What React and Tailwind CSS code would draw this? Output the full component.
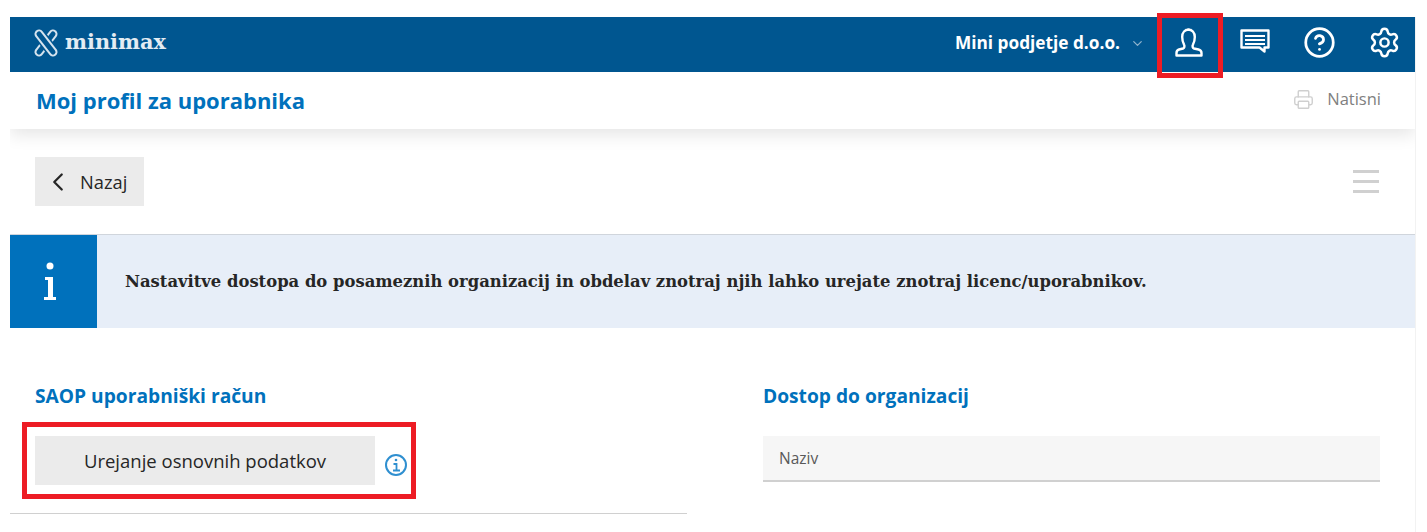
import React from 'react';
import { ChevronDown, ChevronLeft, Printer, CircleHelp, Settings } from 'lucide-react';

const UserIcon = () => (
  <svg width="28" height="30" viewBox="0 0 28 30" fill="none" stroke="white" strokeWidth="2.4" strokeLinejoin="round">
    <path d="M14 1.500c-4 0-6.800 3-6.800 7.500 0 3 .8 5.500 1.800 7.500.8 1.500.5 3.500-1 4l-4 1C2.500 22 1.500 23.500 1.500 25v2.500h25V25c0-1.500-1-3-3-3.500l-4.500-1c-1.500-.5-1.800-2.500-1-4 1-2 1.800-4.500 1.800-7.500 0-4.500-2.800-7.500-6.800-7.500z" />
  </svg>
);

const ChatIcon = () => (
  <svg width="30" height="25" viewBox="0 0 30 25" fill="none" stroke="white" strokeWidth="2.4">
    <path d="M1.500 1.500h27v17h-4v4l-5-4H1.500z" strokeLinejoin="round" />
    <path d="M5 7h20M5 11h20M5 15h20" strokeWidth="1.800" />
  </svg>
);

const LogoMark = () => (
  <svg width="24" height="30" viewBox="0 0 24 30" fill="none" strokeLinecap="round">
    <path d="M19 6L5 24" stroke="#d5e3ee" strokeWidth="9" />
    <path d="M19 6L5 24" stroke="#005690" strokeWidth="5" />
    <path d="M5 6l14 18" stroke="#005690" strokeWidth="12" />
    <path d="M5 6l14 18" stroke="#d5e3ee" strokeWidth="9" />
    <path d="M5 6l14 18" stroke="#005690" strokeWidth="5" />
  </svg>
);

const InfoSmall = () => (
  <svg width="24" height="24" viewBox="0 0 24 24" fill="none" stroke="#2f8fd0" strokeWidth="2">
    <circle cx="12" cy="12" r="10" />
    <circle cx="12" cy="7" r="1.300" fill="#2f8fd0" stroke="none" />
    <path d="M9.500 11H12.500v6.500M9 17.500h7" strokeWidth="1.800" />
  </svg>
);

export default function App() {
  return (
    <div className="relative h-[532px] overflow-hidden bg-white pl-[10px] pr-[12px] pt-[17px] font-['Open_Sans',sans-serif] text-[#262626]">
      <div className="-mr-[1px] h-full overflow-hidden border-r border-[#f2f2f2]">
        {/* Top bar */}
        <header className="relative z-10 flex h-[55px] items-center bg-[#005690] pb-[4px] pl-[24px] pr-[14px] text-white">
          <div className="flex items-center gap-[7px]">
            <LogoMark />
            <span className="font-['DejaVu_Serif',serif] text-[20.800px] font-bold leading-none text-[#e3ecf3]">minimax</span>
          </div>
          <div className="ml-auto flex items-center">
            <span className="text-[17.250px] font-bold">Mini podjetje d.o.o.</span>
            <ChevronDown className="ml-[10px] mt-[2px] h-[15px] w-[15px] text-[#8fb3cc]" strokeWidth={2} />
            <div className="ml-[30px]"><UserIcon /></div>
            <div className="ml-[37px] mb-[3px]"><ChatIcon /></div>
            <CircleHelp className="ml-[33px] h-[33px] w-[33px] text-white" strokeWidth={2} />
            <Settings className="ml-[32px] h-[33px] w-[33px] text-white" strokeWidth={1.800} />
          </div>
        </header>

        {/* Page title */}
        <div className="flex h-[57px] items-center justify-between pb-[2px] pl-[26px] pr-[34px] shadow-[0_6px_16px_rgba(0,0,0,0.1)]">
          <h1 className="text-[22px] font-bold leading-none text-[#0071bc]">Moj profil za uporabnika</h1>
          <div className="flex items-center gap-[13px] text-[#808080]">
            <Printer className="h-[21px] w-[21px] text-[#cfcfcf]" strokeWidth={1.600} />
            <span className="text-[16.500px]">Natisni</span>
          </div>
        </div>

        {/* Toolbar */}
        <div className="flex items-center justify-between pl-[25px] pr-[36px] pt-[28px]">
          <button className="flex h-[49px] w-[109px] items-center bg-[#ebebeb] pl-[8px] text-[18.300px]">
            <ChevronLeft className="h-[30px] w-[30px]" strokeWidth={1.800} />
            <span className="ml-[7px]">Nazaj</span>
          </button>
          <div className="flex w-[26px] flex-col gap-[7px]">
            <div className="h-[3px] bg-[#d0d0d0]" />
            <div className="h-[3px] bg-[#d0d0d0]" />
            <div className="h-[3px] bg-[#d0d0d0]" />
          </div>
        </div>

        {/* Notice */}
        <div className="mt-[28px] flex h-[94px] border-t border-[#d0d5dc] bg-[#e7eef8]">
          <div className="flex w-[87px] items-center justify-center bg-[#0071bc] pr-[7px]">
            <svg width="14" height="40" viewBox="0 0 14 40" fill="white">
              <circle cx="7" cy="4" r="3.500" />
              <path d="M2 15h8v20h3v3H1v-3h4V18H2z" />
            </svg>
          </div>
          <p className="ml-[28px] mt-[2px] self-center font-['DejaVu_Serif',serif] text-[16.400px] font-bold text-[#262626]">
            Nastavitve dostopa do posameznih organizacij in obdelav znotraj njih lahko urejate znotraj licenc/uporabnikov.
          </p>
        </div>

        {/* Columns */}
        <div className="mt-[54px] flex">
          <div className="w-[677px]">
            <h2 className="pl-[25px] text-[19.200px] font-bold leading-[28px] text-[#0071bc]">SAOP uporabniški račun</h2>
            <div className="mt-[26px] flex items-end pl-[25px]">
              <button className="h-[49px] w-[340px] bg-[#ebebeb] text-[18.500px]">Urejanje osnovnih podatkov</button>
              <div className="mb-[8px] ml-[9px]"><InfoSmall /></div>
            </div>
            <div className="mt-[28px] border-t border-[#d0d0d0]" />
          </div>
          <div className="ml-[76px] w-[617px]">
            <h2 className="text-[19.200px] font-bold leading-[28px] text-[#0071bc]">Dostop do organizacij</h2>
            <div className="mt-[26px] flex h-[46px] items-center border-b-2 border-[#d0d0d0] bg-[#f6f6f6] pl-[16px] pt-[2px] text-[15.500px] font-medium text-[#595959]">Naziv</div>
          </div>
        </div>
      </div>

      {/* Red annotation boxes */}
      <div className="pointer-events-none absolute left-[1157px] top-[13px] z-20 h-[65px] w-[66px] border-[5px] border-[#ed1c24]" />
      <div className="pointer-events-none absolute left-[22px] top-[422px] z-20 h-[77px] w-[394px] border-[5px] border-[#ed1c24]" />
    </div>
  );
}
